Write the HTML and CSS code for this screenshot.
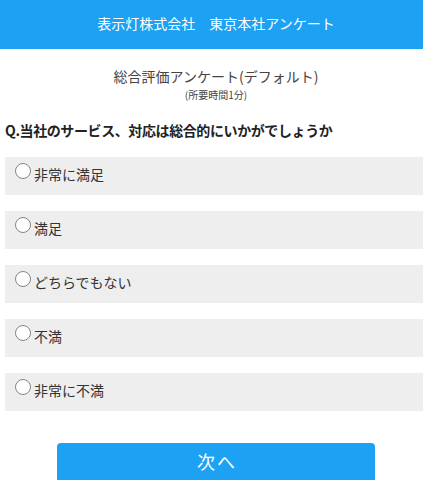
FILE: index.html
```html
<!DOCTYPE html>
<html lang="ja">
<head>
<meta charset="utf-8">
<link rel="stylesheet" href="styles.css">
</head>
<body>
<div class="page">
  <header class="header">表示灯株式会社　東京本社アンケート</header>
  <main class="content">
    <h1 class="title">総合評価アンケート(デフォルト)</h1>
    <p class="subtitle">(所要時間1分)</p>
    <p class="question">Q.当社のサービス、対応は総合的にいかがでしょうか</p>
    <ul class="options">
      <li class="option"><span class="radio"></span><span class="label">非常に満足</span></li>
      <li class="option"><span class="radio"></span><span class="label">満足</span></li>
      <li class="option"><span class="radio"></span><span class="label">どちらでもない</span></li>
      <li class="option"><span class="radio"></span><span class="label">不満</span></li>
      <li class="option"><span class="radio"></span><span class="label">非常に不満</span></li>
    </ul>
    <button class="next">次へ</button>
  </main>
</div>
</body>
</html>
```

FILE: styles.css
```css
html, body {
  margin: 0;
  padding: 0;
  overflow: hidden;
  background: #fff;
}
body {
  font-family: "Noto Sans CJK JP", "Noto Sans", sans-serif;
  color: #333;
}
.page {
  width: 432px;
}
.header {
  height: 49px;
  line-height: 47px;
  background: #1da1f2;
  color: #fff;
  font-size: 14px;
  text-align: center;
}
.content {
  padding: 0 5px;
}
.title {
  margin: 17px 0 0;
  font-size: 14px;
  font-weight: normal;
  line-height: 20px;
  text-align: center;
  color: #444;
}
.subtitle {
  margin: 2px 0 0;
  font-size: 10px;
  line-height: 14px;
  text-align: center;
  color: #444;
}
.question {
  margin: 18px 0 0;
  font-size: 14px;
  font-weight: bold;
  line-height: 20px;
  letter-spacing: -0.4px;
  color: #222;
}
.options {
  list-style: none;
  margin: 17px 0 0;
  padding: 0;
  display: flex;
  flex-direction: column;
  gap: 16px;
}
.option {
  height: 38px;
  background: #eeeeee;
  display: flex;
  align-items: flex-start;
  padding-left: 10px;
}
.radio {
  width: 14px;
  height: 14px;
  margin-top: 6px;
  border: 1px solid #858585;
  border-radius: 50%;
  background: #fff;
  flex: none;
}
.label {
  margin-left: 3px;
  margin-top: 7px;
  font-size: 14px;
  line-height: 20px;
  color: #333;
}
.next {
  display: block;
  margin: 32px 0 0 52px;
  width: 318px;
  height: 40px;
  border: none;
  border-radius: 4px;
  background: #1da1f2;
  color: #fff;
  font-family: "Noto Sans CJK JP", "Noto Sans", sans-serif;
  font-size: 18px;
  line-height: 36px;
  letter-spacing: 2px;
  text-indent: 2px;
  padding: 0 0 4px;
}
```
